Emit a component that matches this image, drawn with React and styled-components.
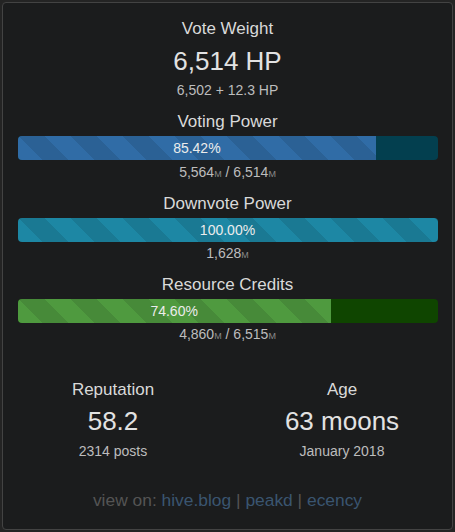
import React from "react";
import styled, { createGlobalStyle } from "styled-components";

const GlobalStyle = createGlobalStyle`
  html, body {
    margin: 0;
    padding: 0;
    background: #242424;
  }
  body {
    font-family: "Liberation Sans", Arial, sans-serif;
  }
`;

const Card = styled.div`
  box-sizing: border-box;
  margin: 2px;
  width: 451px;
  height: 528px;
  border: 1px solid #434343;
  border-radius: 4px;
  background: #1b1c1d;
  padding: 15px 14px 0;
  display: flex;
  flex-direction: column;
  align-items: center;
`;

const Label = styled.div`
  font-size: 17px;
  line-height: 22px;
  color: #d9d9d9;
  margin-top: ${p => p.$gap || 0}px;
  text-align: center;
`;

const Big = styled.div`
  font-size: 26px;
  line-height: 30px;
  color: #e2e2e2;
  margin-top: ${p => p.$gap || 0}px;
  text-align: center;
`;

const Sub = styled.div`
  font-size: 14px;
  line-height: 18px;
  color: #bdbdbd;
  margin-top: ${p => p.$gap || 0}px;
  text-align: center;
`;

const Unit = styled.span`
  font-size: 9px;
  color: #8a8a8a;
`;

const Track = styled.div`
  width: 420px;
  height: 24px;
  margin-top: 3px;
  border-radius: 4px;
  overflow: hidden;
  display: flex;
  background: ${p => p.$track};
`;

const Fill = styled.div`
  height: 100%;
  display: flex;
  align-items: center;
  justify-content: center;
  font-size: 14px;
  color: #ececec;
  background-color: ${p => p.$color};
  background-image: linear-gradient(
    45deg,
    rgba(0, 0, 0, 0.1) 25%,
    transparent 25%,
    transparent 50%,
    rgba(0, 0, 0, 0.1) 50%,
    rgba(0, 0, 0, 0.1) 75%,
    transparent 75%,
    transparent
  );
  background-size: 52px 52px;
`;

const Columns = styled.div`
  display: grid;
  grid-template-columns: 229px 229px;
  justify-content: center;
  width: 100%;
  margin-top: 34px;
`;

const Col = styled.div`
  display: flex;
  flex-direction: column;
  align-items: center;
`;

const Footer = styled.div`
  margin-top: 30px;
  font-size: 17.4px;
  line-height: 20px;
  color: #545454;
`;

const Link = styled.a`
  color: #3a5570;
  text-decoration: none;
`;

function Bar({ pct, color, track }) {
  return (
    <Track $track={track}>
      <Fill $color={color} style={{ width: `${pct}%` }}>
        {pct.toFixed(2)}%
      </Fill>
    </Track>
  );
}

const M = () => <Unit>M</Unit>;

export default function App() {
  return (
    <>
      <GlobalStyle />
      <Card>
        <Label>Vote Weight</Label>
        <Big $gap={6}>6,514 HP</Big>
        <Sub $gap={5}>6,502 + 12.3 HP</Sub>

        <Label $gap={12}>Voting Power</Label>
        <Bar pct={85.42} color="#306ca6" track="#033f4f" />
        <Sub $gap={3}>
          5,564<M /> / 6,514<M />
        </Sub>

        <Label $gap={10}>Downvote Power</Label>
        <Bar pct={100} color="#1d87a4" track="#0d4a5a" />
        <Sub $gap={2}>
          1,628<M />
        </Sub>

        <Label $gap={10}>Resource Credits</Label>
        <Bar pct={74.6} color="#4f9a3f" track="#0f4500" />
        <Sub $gap={2}>
          4,860<M /> / 6,515<M />
        </Sub>

        <Columns>
          <Col>
            <Label>Reputation</Label>
            <Big $gap={5}>58.2</Big>
            <Sub $gap={6}>2314 posts</Sub>
          </Col>
          <Col>
            <Label>Age</Label>
            <Big $gap={5}>63 moons</Big>
            <Sub $gap={6}>January 2018</Sub>
          </Col>
        </Columns>

        <Footer>
          view on: <Link href="#">hive.blog</Link> | <Link href="#">peakd</Link> |{" "}
          <Link href="#">ecency</Link>
        </Footer>
      </Card>
    </>
  );
}
